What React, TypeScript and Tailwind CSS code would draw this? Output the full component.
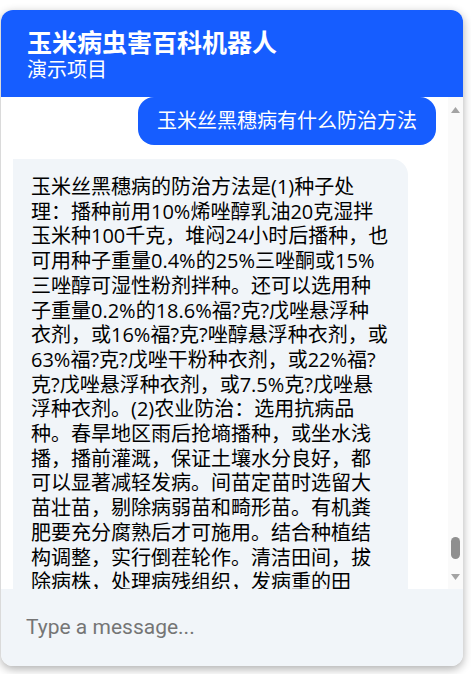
const BOT_TEXT =
  "玉米丝黑穗病的防治方法是(1)种子处理：播种前用10%烯唑醇乳油20克湿拌玉米种100千克，堆闷24小时后播种，也可用种子重量0.4%的25%三唑酮或15%三唑醇可湿性粉剂拌种。还可以选用种子重量0.2%的18.6%福?克?戊唑悬浮种衣剂，或16%福?克?唑醇悬浮种衣剂，或63%福?克?戊唑干粉种衣剂，或22%福?克?戊唑悬浮种衣剂，或7.5%克?戊唑悬浮种衣剂。(2)农业防治：选用抗病品种。春旱地区雨后抢墒播种，或坐水浅播，播前灌溉，保证土壤水分良好，都可以显著减轻发病。间苗定苗时选留大苗壮苗，剔除病弱苗和畸形苗。有机粪肥要充分腐熟后才可施用。结合种植结构调整，实行倒茬轮作。清洁田间，拔除病株，处理病残组织，发病重的田块，实行3年以上轮作。";

function ScrollBar() {
  return (
    <div className="flex w-[15px] shrink-0 flex-col items-center bg-[#fafafa] pb-[9px] pt-[10px]">
      <svg width="9" height="6" viewBox="0 0 9 6" className="ml-[-1px]">
        <polygon points="4.5,0 9,6 0,6" fill="#a3a3a3" />
      </svg>
      <div className="flex flex-1 flex-col items-center justify-end pb-[15px]">
        <div className="ml-[-1px] h-[22px] w-[9px] rounded-full bg-[#8f8f8f]" />
      </div>
      <svg width="9" height="6" viewBox="0 0 9 6" className="ml-[-1px]">
        <polygon points="0,0 9,0 4.5,6" fill="#a3a3a3" />
      </svg>
    </div>
  );
}

export default function App() {
  return (
    <div
      className="min-h-screen bg-white"
      style={{ fontFamily: '"Open Sans", "Noto Sans CJK SC", sans-serif' }}
    >
      <div className="ml-[1px] mt-[10px] flex h-[656px] w-[462px] flex-col overflow-hidden rounded-xl bg-white shadow-[0_3px_10px_rgba(0,0,0,0.32)]">
        <header className="bg-[#165dff] px-[26px] pb-[15px] pt-4 text-white">
          <h1 className="text-[25px] font-bold leading-8">玉米病虫害百科机器人</h1>
          <p className="text-[20px] leading-6">演示项目</p>
        </header>

        <div className="flex min-h-0 flex-1">
          <div className="min-w-0 flex-1 overflow-y-auto bg-white [scrollbar-width:none]">
            <div className="flex flex-col gap-[14px] px-3 pb-3">
              <div className="self-end rounded-2xl bg-[#165dff] px-[19px] py-3 text-[20px] leading-6 text-white">
                玉米丝黑穗病有什么防治方法
              </div>
              <div className="w-[395px] self-start rounded-2xl rounded-tl-none bg-[#f1f5f9] pb-4 pl-[18px] pr-[19px] pt-4 text-[20px] leading-[24.7px] text-black">
                {BOT_TEXT}
              </div>
            </div>
          </div>
          <ScrollBar />
        </div>

        <div className="flex h-[77px] items-center bg-[#f1f5f9] pl-[25px] pr-4">
          <input
            type="text"
            placeholder="Type a message..."
            className="w-full bg-transparent text-[21px] text-gray-800 outline-none placeholder:text-[#757575]"
            style={{ fontFamily: "Roboto, sans-serif" }}
          />
        </div>
      </div>
    </div>
  );
}
